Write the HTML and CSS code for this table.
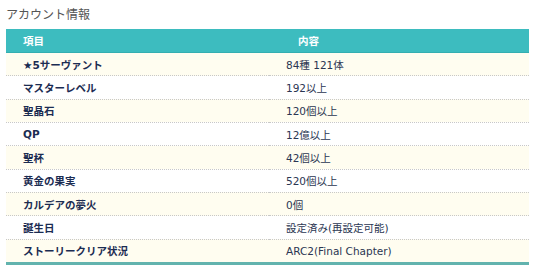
FILE: index.html
```html
<!DOCTYPE html>
<html lang="ja">
<head>
<meta charset="utf-8">
<link rel="stylesheet" href="styles.css">
</head>
<body>
<div class="page">
  <h2 class="title">アカウント情報</h2>
  <table class="info">
    <thead>
      <tr><th class="col-key">項目</th><th class="col-val">内容</th></tr>
    </thead>
    <tbody>
      <tr class="odd"><td class="key">★5サーヴァント</td><td class="val">84種 121体</td></tr>
      <tr><td class="key">マスターレベル</td><td class="val">192以上</td></tr>
      <tr class="odd"><td class="key">聖晶石</td><td class="val">120個以上</td></tr>
      <tr><td class="key">QP</td><td class="val">12億以上</td></tr>
      <tr class="odd"><td class="key">聖杯</td><td class="val">42個以上</td></tr>
      <tr><td class="key">黄金の果実</td><td class="val">520個以上</td></tr>
      <tr class="odd"><td class="key">カルデアの夢火</td><td class="val">0個</td></tr>
      <tr><td class="key">誕生日</td><td class="val">設定済み(再設定可能)</td></tr>
      <tr class="odd last"><td class="key">ストーリークリア状況</td><td class="val">ARC2(Final Chapter)</td></tr>
    </tbody>
  </table>
</div>
</body>
</html>
```
FILE: styles.css
```css
html, body {
  margin: 0;
  padding: 0;
  background: #ffffff;
}
.page {
  padding: 0 10px 0 6px;
  font-family: "DejaVu Sans", "Noto Sans CJK JP", sans-serif;
}
.title {
  margin: 0;
  padding-top: 6px;
  height: 23px;
  font-family: "Noto Sans CJK JP", sans-serif;
  font-size: 12px;
  line-height: 15px;
  font-weight: normal;
  color: #555555;
}
.info {
  width: 523px;
  border-collapse: collapse;
  font-size: 10.5px;
  table-layout: fixed;
}
.info th {
  background: #3dbcbf;
  color: #ffffff;
  font-weight: bold;
  text-align: left;
  height: 23px;
  padding: 0 17px;
  border-bottom: 1px solid #34aeb1;
}
.info th.col-key { width: 229px; }
.info th.col-val { padding-left: 29px; }
.info td {
  height: 22.33px;
  padding: 0 17px;
  border-bottom: 1px dotted #c8c8c8;
  color: #2b3652;
}
.info td.key {
  font-weight: bold;
  color: #1b2c52;
}
.info tr.odd td { background: #fffdf0; }
.info tr.last td { border-bottom: 3px solid #62b3ae; }
```
